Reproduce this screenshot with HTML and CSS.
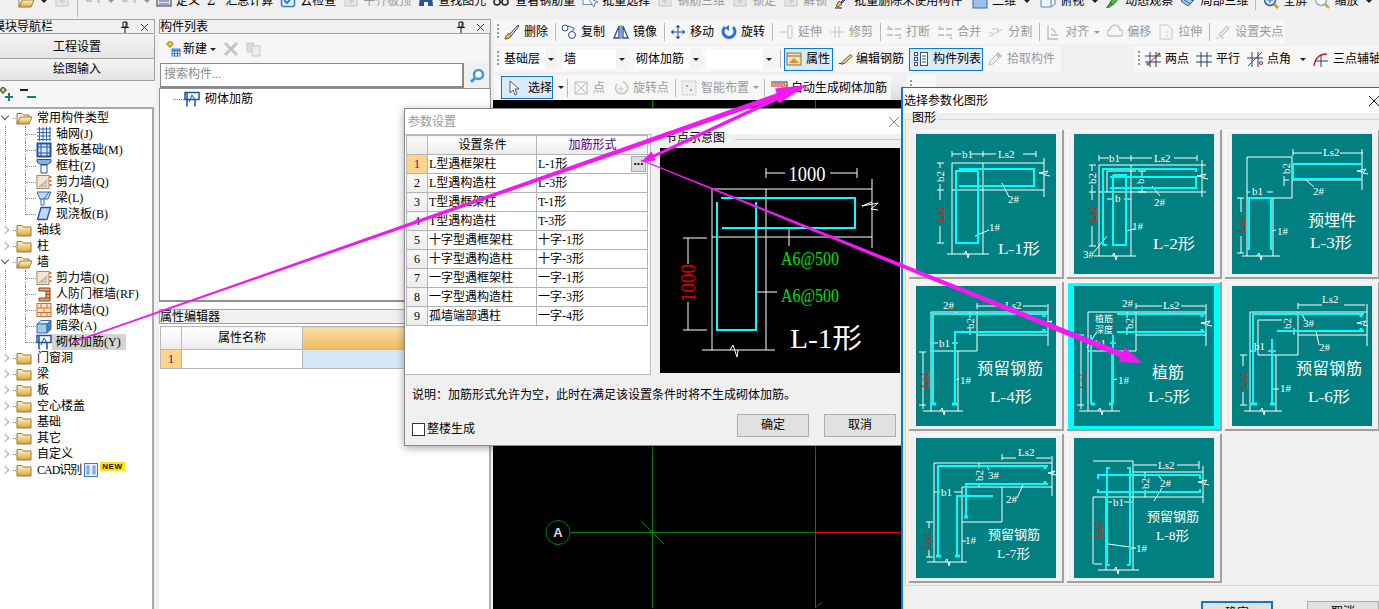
FILE: index.html
```html
<!DOCTYPE html>
<html lang="zh-CN">
<head>
<meta charset="utf-8">
<title>参数设置</title>
<link rel="stylesheet" href="styles.css">
</head>
<body>
<svg class="defs" width="0" height="0" aria-hidden="true">
  <defs>
    <linearGradient id="fy" x1="0" y1="0" x2="0" y2="1"><stop offset="0" stop-color="#fff6c8"/><stop offset="1" stop-color="#e0a428"/></linearGradient>
    <symbol id="folder" viewBox="0 0 16 16"><path d="M1 3.5h5l1.500 1.500H15v9H1z" fill="url(#fy)" stroke="#8a7a50"/></symbol>
    <symbol id="open" viewBox="0 0 16 16"><path d="M1 3.500h5l1.500 1.500H13v2.500H4.500L1 14z" fill="#fff2c4" stroke="#8a7a50"/><path d="M1 14l3.500-7H16l-3 7z" fill="url(#fy)" stroke="#8a7a50"/></symbol>
    <symbol id="grid" viewBox="0 0 16 16"><path d="M1 3h14M1 6.500h14M1 10h14M1 13.500h14M3.500 1v14M7 1v14M10.500 1v14M14 1v14" stroke="#2f62b8" fill="none"/></symbol>
    <symbol id="raft" viewBox="0 0 16 16"><rect x="1.500" y="1.500" width="13" height="13" fill="#dce8f7" stroke="#1f50a8" stroke-width="2"/><path d="M5 1v14M11 1v14M1 5h14M1 11h14" stroke="#1f50a8"/></symbol>
    <symbol id="col" viewBox="0 0 16 16"><path d="M1 1.500h14v2.500l-3.500 2.500H4.500L1 4z" fill="#7fb2e6" stroke="#1f50a8"/><path d="M5 7h6v8H5z" fill="#fff" stroke="#1f50a8"/></symbol>
    <symbol id="shear" viewBox="0 0 16 16"><rect x="1" y="1.500" width="12" height="13" fill="#f3e3d2" stroke="#a88860"/><path d="M3 13l8-7M5 13l6-5M8 13l3-2" stroke="#999"/><path d="M14.500 2v2M14.500 6v2M14.500 10v2" stroke="#e07018" stroke-width="2"/></symbol>
    <symbol id="beam" viewBox="0 0 16 16"><path d="M1 2h14l-3 7H4z" fill="#bcdcf6" stroke="#2a6cc0"/><path d="M5 9v6h3V9M8 9l5-7" stroke="#2a6cc0" fill="none"/></symbol>
    <symbol id="slab" viewBox="0 0 16 16"><path d="M5 1.500h9.500L11 13.500H1.500z" fill="#bcdcf6" stroke="#1f50a8" stroke-width="1.300"/></symbol>
    <symbol id="frame" viewBox="0 0 16 16"><path d="M3 2h11v13H3v-3h7V5H3z" fill="#e8a878" stroke="#8a4018"/><path d="M10 5h4M10 8.500h4M10 12h4" stroke="#8a4018"/></symbol>
    <symbol id="brick" viewBox="0 0 16 16"><rect x="1" y="1.500" width="14" height="13" fill="#fce4cc" stroke="#d07030"/><path d="M1 6h14M1 10.500h14M5 1.500V6M11 1.500V6M8 6v4.500M5 10.500v4M11 10.500v4" stroke="#d07030"/></symbol>
    <symbol id="dark" viewBox="0 0 16 16"><path d="M1 6l4-3.500h10L11 6z" fill="#dcecfa" stroke="#3a6ea8"/><path d="M1 6h10v9H1z" fill="#a8c8e8" stroke="#3a6ea8"/><path d="M11 6l4-3.500v9L11 15z" fill="#4a80b8" stroke="#3a6ea8"/></symbol>
    <symbol id="rebar" viewBox="0 0 16 16"><path d="M1 1.500h14v7H1zM3 1.500v14M11 8.500v7" fill="none" stroke="#1f50a8" stroke-width="1.500"/><path d="M5 11l3-7 3 5" fill="none" stroke="#1f50a8"/></symbol>
    <symbol id="add" viewBox="0 0 16 16"><path d="M4 0h2v2h2v2H6v2H4V4H2V2h2z" fill="#f6d94a" stroke="#a08820"/><rect x="7" y="8" width="8" height="7" fill="#fff" stroke="#3a78c8"/><path d="M7 9.500h8" stroke="#3a78c8" stroke-width="2"/><path d="M9.500 10v5M12.500 10v5M7 12.500h8" stroke="#3a78c8"/></symbol>
    <symbol id="del" viewBox="0 0 16 16"><path d="M2 2l12 12M14 2L2 14" stroke="#c4c4c4" stroke-width="3"/></symbol>
    <symbol id="copyg" viewBox="0 0 16 16"><path d="M1 2h7v9H1z" fill="#ddd" stroke="#c8c8c8"/><path d="M6 5h8v10H6z" fill="#eee" stroke="#c8c8c8"/></symbol>
    <symbol id="lens" viewBox="0 0 16 16"><circle cx="9.500" cy="6.500" r="4.500" fill="#fff" stroke="#3a9ae8" stroke-width="2.500"/><path d="M6 10l-4 4" stroke="#3a9ae8" stroke-width="3"/></symbol>
    <symbol id="doc" viewBox="0 0 16 16"><rect x="1" y="2" width="14" height="11" fill="#dfe8f2" stroke="#334"/><path d="M3 5h10M3 8h10M3 11h10" stroke="#557"/></symbol>
    <symbol id="check" viewBox="0 0 16 16"><rect x="1.500" y="1.500" width="13" height="12" rx="2" fill="#eaf4fd" stroke="#2a80c8" stroke-width="1.500"/><path d="M4 7l3 3 5-6" stroke="#2a80c8" stroke-width="2" fill="none"/></symbol>
    <symbol id="gray" viewBox="0 0 16 16"><rect x="2" y="3" width="12" height="10" fill="#e6e6e6" stroke="#c4c4c4"/><path d="M5 8h6M8 5v6" stroke="#c4c4c4"/></symbol>
    <symbol id="undo" viewBox="0 0 16 16"><path d="M3 6c4-4 10-3 11 4" fill="none" stroke="#c4c4c4" stroke-width="2.500"/><path d="M1 2v7h7z" fill="#c4c4c4"/></symbol>
    <symbol id="binoc" viewBox="0 0 16 16"><path d="M2 3h4v10H1zM10 3h4l1 10h-5zM6 6h4v3H6z" fill="#35508a"/></symbol>
    <symbol id="glasses" viewBox="0 0 16 16"><circle cx="4" cy="9" r="3" fill="none" stroke="#222" stroke-width="1.500"/><circle cx="12" cy="9" r="3" fill="none" stroke="#222" stroke-width="1.500"/><path d="M7 9h2" stroke="#222"/></symbol>
    <symbol id="pick" viewBox="0 0 16 16"><rect x="1" y="1.500" width="10" height="10" fill="#fff" stroke="#6888b8"/><path d="M6 5l6 9 1-4 3-1z" fill="#fff" stroke="#6888b8"/></symbol>
    <symbol id="brush" viewBox="0 0 16 16"><path d="M2 13l3-5 3 3-4 3z" fill="#e8c070" stroke="#705020"/><path d="M7 9l7-7 1 1-7 7z" fill="#6080c8" stroke="#304078"/><path d="M1 15h7" stroke="#222"/></symbol>
    <symbol id="plane" viewBox="0 0 16 16"><rect x="1" y="1" width="14" height="14" fill="#9ec0ee" stroke="#3a68b0"/></symbol>
    <symbol id="box3" viewBox="0 0 16 16"><path d="M1 5l4-3h10v9l-4 3H1z" fill="#eef5fc" stroke="#5a88b8"/><path d="M1 5h10v9M11 5l4-3" fill="none" stroke="#5a88b8"/></symbol>
    <symbol id="orbit" viewBox="0 0 16 16"><path d="M1 15l4-6 3 3-4 3z" fill="#2a9a38"/><path d="M5 9l8-7 2 2-7 8z" fill="#58b848" stroke="#207028"/></symbol>
    <symbol id="local3" viewBox="0 0 16 16"><path d="M1 8l7-6 7 4-7 7z" fill="#a8cce8" stroke="#2a5c90"/><path d="M4 7l7 4M7 4.500l6 3.500" stroke="#2a5c90"/></symbol>
    <symbol id="zoomin" viewBox="0 0 16 16"><circle cx="7" cy="7" r="5.500" fill="#dbeafa" stroke="#345c90" stroke-width="1.500"/><path d="M4 7h6M7 4v6" stroke="#345c90"/><path d="M11 11l4 4" stroke="#c89838" stroke-width="2.500"/></symbol>
    <symbol id="zoomx" viewBox="0 0 16 16"><circle cx="7" cy="7" r="5.500" fill="#fff" stroke="#8ab0d0" stroke-width="1.500"/><path d="M11 11l4 4" stroke="#d8a838" stroke-width="2.500"/></symbol>
    <symbol id="erase" viewBox="0 0 16 16"><path d="M1 15c1-4 3-6 5-5l1 2c-1 2-3 3-6 3z" fill="#e8b048" stroke="#685020"/><path d="M6 10l8-9 1 1-8 10" fill="#fff" stroke="#203878"/></symbol>
    <symbol id="copyc" viewBox="0 0 16 16"><circle cx="4" cy="4" r="3" fill="none" stroke="#345078"/><circle cx="11" cy="11" r="3.500" fill="none" stroke="#345078"/><path d="M7 2l6 2-2 4" fill="none" stroke="#2a70c8"/></symbol>
    <symbol id="mirror" viewBox="0 0 16 16"><path d="M1 14L6 2v12zM15 14L10 2v12z" fill="none" stroke="#28509a" stroke-width="1.300"/><path d="M8 1v14" stroke="#28509a"/></symbol>
    <symbol id="move" viewBox="0 0 16 16"><path d="M8 1v14M1 8h14" stroke="#28509a"/><path d="M8 1l2.500 2.500h-5zM8 15l2.500-2.500h-5zM1 8l2.500-2.500v5zM15 8l-2.500-2.500v5z" fill="#28509a"/></symbol>
    <symbol id="rotate" viewBox="0 0 16 16"><path d="M4 3a6 6 0 1 0 8 0" fill="none" stroke="#2a70d0" stroke-width="3"/><path d="M8 1v6L4 4z" fill="#2a70d0"/></symbol>
    <symbol id="gline" viewBox="0 0 16 16"><path d="M1 8h8M10 2h4v12h-4z" fill="none" stroke="#c4c4c4"/></symbol>
    <symbol id="gcross" viewBox="0 0 16 16"><path d="M1 8h14M6 2v12M10 2v12" fill="none" stroke="#c4c4c4"/></symbol>
    <symbol id="gbreak" viewBox="0 0 16 16"><path d="M1 5h6M1 11h6M9 5h6M9 11h6M2 2l2 2M13 13l2 2" fill="none" stroke="#bbb" stroke-width="1.300"/></symbol>
    <symbol id="gcut" viewBox="0 0 16 16"><path d="M1 13l13-8M4 5h6v4M1 9h4" fill="none" stroke="#c4c4c4"/></symbol>
    <symbol id="galign" viewBox="0 0 16 16"><path d="M3 1v14h10M6 4l5 5M6 11h7" fill="none" stroke="#bbb" stroke-width="1.300"/></symbol>
    <symbol id="gcloud" viewBox="0 0 16 16"><path d="M3 12a3 3 0 0 1 0-6 5 5 0 0 1 10 0 3 3 0 0 1 0 6z" fill="none" stroke="#c4c4c4" stroke-width="1.500"/></symbol>
    <symbol id="gpage" viewBox="0 0 16 16"><path d="M2 1h8l4 4v10H2z" fill="none" stroke="#c4c4c4"/><path d="M9 7v2M9 11v2" stroke="#c4c4c4"/></symbol>
    <symbol id="gpen" viewBox="0 0 16 16"><path d="M1 14h3M6 14h3M4 11l8-9 2 2-8 9z" fill="none" stroke="#c4c4c4" stroke-width="1.200"/></symbol>
    <symbol id="prop" viewBox="0 0 16 16"><rect x="1" y="2" width="14" height="12" fill="#f4e0b0" stroke="#8a7040"/><path d="M1 5h14" stroke="#8a7040"/><path d="M3 12l5-5 5 5z" fill="#d09838"/></symbol>
    <symbol id="pen2" viewBox="0 0 18 16"><path d="M1 13h7" stroke="#222"/><path d="M5 11l9-8 2 2-9 8-3 1z" fill="#e8d090" stroke="#605030"/></symbol>
    <symbol id="list" viewBox="0 0 16 16"><rect x="1.500" y="1.500" width="3" height="3" fill="#fff" stroke="#345078"/><rect x="1.500" y="6.500" width="3" height="3" fill="#fff" stroke="#345078"/><rect x="1.500" y="11.500" width="3" height="3" fill="#fff" stroke="#345078"/><rect x="7.500" y="1.500" width="7" height="13" fill="#fff" stroke="#345078"/><path d="M9 5h4M9 8h4M9 11h4" stroke="#345078"/></symbol>
    <symbol id="dropper" viewBox="0 0 16 16"><path d="M2 14l1-4 6-6 3 3-6 6z" fill="#eee" stroke="#bbb"/><path d="M10 2l4 4" stroke="#bbb" stroke-width="3"/></symbol>
    <symbol id="twop" viewBox="0 0 16 16"><path d="M5 1v15M11 1v15M0 5h16M0 11h16" stroke="#28406a"/><path d="M2 14L15 2" stroke="#d01818"/><circle cx="3" cy="13" r="1.500" fill="#50801a"/><circle cx="14" cy="3" r="1.500" fill="#50801a"/></symbol>
    <symbol id="para" viewBox="0 0 16 16"><path d="M5 1v15M11 1v15M0 5h16M0 11h16" stroke="#28406a"/></symbol>
    <symbol id="ang" viewBox="0 0 16 16"><path d="M5 1v15M11 1v15M0 7h16" stroke="#28406a"/><path d="M1 15L15 1" stroke="#d01818"/><circle cx="14" cy="12" r="1.500" fill="none" stroke="#d01818"/></symbol>
    <symbol id="arc" viewBox="0 0 16 16"><path d="M1 15C2 7 7 3 14 3" fill="none" stroke="#d01818" stroke-width="1.300"/><path d="M8 4v12M2 10h13" stroke="#28406a"/></symbol>
    <symbol id="cursor" viewBox="0 0 16 16"><path d="M5 1v12l3-3 2 5 2-1-2-5h4z" fill="#fff" stroke="#556"/></symbol>
    <symbol id="gbox" viewBox="0 0 16 16"><rect x="2" y="2" width="12" height="12" fill="none" stroke="#bbb"/><path d="M2 2l12 12M14 2L2 14" stroke="#bbb"/></symbol>
    <symbol id="grot" viewBox="0 0 16 16"><path d="M4 4a6 6 0 1 0 6-2" fill="none" stroke="#c4c4c4" stroke-width="1.500"/><path d="M8 6v6M5 9h6" stroke="#c4c4c4"/></symbol>
    <symbol id="gdots" viewBox="0 0 16 16"><rect x="1" y="1" width="14" height="14" fill="#eee" stroke="#c4c4c4" stroke-dasharray="2 1"/><path d="M5 5h2v2H5zM9 9h2v2H9z" fill="#aaa"/></symbol>
    <symbol id="auto" viewBox="0 0 18 16"><path d="M1 2h16v13" fill="none" stroke="#333"/><path d="M1 4h14v11" fill="none" stroke="#e01818"/><path d="M1 6h12v9" fill="none" stroke="#e01818"/></symbol>
    <symbol id="blue" viewBox="0 0 14 14"><rect x=".5" y=".5" width="13" height="13" fill="#e8f2fc" stroke="#3a78c8"/><path d="M3 3h2v8H3zM9 3h2v8H9z" fill="#bcd8f4" stroke="#3a78c8" stroke-width=".8"/></symbol>
    <symbol id="pinic" viewBox="0 0 10 12"><path d="M3 1h4v5H3z" fill="#fff" stroke="#111"/><path d="M1 6.500h8M5 7v5" stroke="#111"/><path d="M6 1v5" stroke="#111"/></symbol>
    <symbol id="xxic" viewBox="0 0 9 9"><path d="M1 1l7 7M8 1L1 8" stroke="#333"/></symbol>
    <symbol id="expall" viewBox="0 0 14 14"><path d="M2 0h2v2h2v2H4v2H2V4H0V2h2z" fill="#e6d86a" stroke="#222" stroke-width=".8"/><path d="M9 6v8M5 10h8" stroke="#1e7a7a" stroke-width="2"/></symbol>
    <symbol id="colall" viewBox="0 0 16 14"><path d="M0 3h8" stroke="#222" stroke-width="2"/><path d="M7 10h9" stroke="#1e7a7a" stroke-width="2"/></symbol>
  </defs>
</svg>

<div class="app">
  <div class="topbar">
    <div class="toprow">
      <svg class="ic"><use href="#open"/></svg><i class="dd"></i>
      <svg class="ic off"><use href="#gray"/></svg>
      <i class="sep tall"></i>
      <svg class="ic off"><use href="#undo"/></svg><i class="dd off"></i>
      <svg class="ic off"><use href="#undo"/></svg><i class="dd off"></i>
      <span class="tb m1"><svg class="ic"><use href="#doc"/></svg>定义</span>
      <span class="tb sum"><b class="sigma">Σ</b>汇总计算</span>
      <span class="tb"><svg class="ic"><use href="#check"/></svg>云检查</span>
      <span class="tb off"><svg class="ic"><use href="#gray"/></svg>平齐板顶</span>
      <span class="tb"><svg class="ic"><use href="#binoc"/></svg>查找图元</span>
      <span class="tb tight"><svg class="ic"><use href="#glasses"/></svg>查看钢筋量</span>
      <span class="tb"><svg class="ic"><use href="#pick"/></svg>批量选择</span>
      <span class="tb off"><svg class="ic"><use href="#gray"/></svg>钢筋三维</span>
      <span class="tb off"><svg class="ic"><use href="#gray"/></svg>锁定</span>
      <span class="tb off"><svg class="ic"><use href="#gray"/></svg>解锁</span>
      <span class="tb"><svg class="ic"><use href="#brush"/></svg>批量删除未使用构件</span>
      <span class="tb sp"><svg class="ic"><use href="#plane"/></svg>二维<i class="dd"></i></span>
      <span class="tb sp"><svg class="ic"><use href="#box3"/></svg>俯视<i class="dd"></i></span>
      <span class="tb"><svg class="ic"><use href="#orbit"/></svg>动态观察</span>
      <span class="tb"><svg class="ic"><use href="#local3"/></svg>局部三维</span>
      <i class="sep"></i>
      <span class="tb"><svg class="ic"><use href="#zoomin"/></svg>全屏</span>
      <span class="tb"><svg class="ic"><use href="#zoomx"/></svg>缩放<i class="dd"></i></span>
    </div>
  </div>

  <div class="main">
    <aside class="left">
      <div class="dock-head"><span class="dock-cut">模块导航栏</span><span class="dock-tools"><svg class="pinic"><use href="#pinic"/></svg><svg class="xxic"><use href="#xxic"/></svg></span></div>
      <div class="nav-btn first">工程设置</div>
      <div class="nav-btn">绘图输入</div>
      <div class="tree-tools"><svg class="tt"><use href="#expall"/></svg><svg class="tt2"><use href="#colall"/></svg></div>
      <div class="tree">
        <div class="node-row"><span class="exp down"></span><span class="hconn"></span><svg class="ic"><use href="#open"/></svg><span class="lb">常用构件类型</span></div>
        <div class="kid"><span class="conn"></span><svg class="ic"><use href="#grid"/></svg><span class="lb">轴网(J)</span></div>
        <div class="kid"><span class="conn"></span><svg class="ic"><use href="#raft"/></svg><span class="lb">筏板基础(M)</span></div>
        <div class="kid"><span class="conn"></span><svg class="ic"><use href="#col"/></svg><span class="lb">框柱(Z)</span></div>
        <div class="kid"><span class="conn"></span><svg class="ic"><use href="#shear"/></svg><span class="lb">剪力墙(Q)</span></div>
        <div class="kid"><span class="conn"></span><svg class="ic"><use href="#beam"/></svg><span class="lb">梁(L)</span></div>
        <div class="kid end"><span class="conn"></span><svg class="ic"><use href="#slab"/></svg><span class="lb">现浇板(B)</span></div>
        <div class="node-row"><span class="exp"></span><span class="hconn"></span><svg class="ic"><use href="#folder"/></svg><span class="lb">轴线</span></div>
        <div class="node-row"><span class="exp"></span><span class="hconn"></span><svg class="ic"><use href="#folder"/></svg><span class="lb">柱</span></div>
        <div class="node-row"><span class="exp down"></span><span class="hconn"></span><svg class="ic"><use href="#open"/></svg><span class="lb">墙</span></div>
        <div class="kid"><span class="conn"></span><svg class="ic"><use href="#shear"/></svg><span class="lb">剪力墙(Q)</span></div>
        <div class="kid"><span class="conn"></span><svg class="ic"><use href="#frame"/></svg><span class="lb">人防门框墙(RF)</span></div>
        <div class="kid"><span class="conn"></span><svg class="ic"><use href="#brick"/></svg><span class="lb">砌体墙(Q)</span></div>
        <div class="kid"><span class="conn"></span><svg class="ic"><use href="#dark"/></svg><span class="lb">暗梁(A)</span></div>
        <div class="kid end"><span class="conn"></span><svg class="ic"><use href="#rebar"/></svg><span class="lb sel-row">砌体加筋(Y)</span></div>
        <div class="node-row"><span class="exp"></span><span class="hconn"></span><svg class="ic"><use href="#folder"/></svg><span class="lb">门窗洞</span></div>
        <div class="node-row"><span class="exp"></span><span class="hconn"></span><svg class="ic"><use href="#folder"/></svg><span class="lb">梁</span></div>
        <div class="node-row"><span class="exp"></span><span class="hconn"></span><svg class="ic"><use href="#folder"/></svg><span class="lb">板</span></div>
        <div class="node-row"><span class="exp"></span><span class="hconn"></span><svg class="ic"><use href="#folder"/></svg><span class="lb">空心楼盖</span></div>
        <div class="node-row"><span class="exp"></span><span class="hconn"></span><svg class="ic"><use href="#folder"/></svg><span class="lb">基础</span></div>
        <div class="node-row"><span class="exp"></span><span class="hconn"></span><svg class="ic"><use href="#folder"/></svg><span class="lb">其它</span></div>
        <div class="node-row"><span class="exp"></span><span class="hconn"></span><svg class="ic"><use href="#folder"/></svg><span class="lb">自定义</span></div>
        <div class="node-row"><span class="exp"></span><span class="hconn"></span><svg class="ic"><use href="#folder"/></svg><span class="lb cad-lb">CAD识别</span><svg class="cadic"><use href="#blue"/></svg><span class="newtag">NEW</span></div>
      </div>
    </aside>

    <section class="mid">
      <div class="dock-head"><span>构件列表</span><span class="dock-tools"><svg class="pinic"><use href="#pinic"/></svg><svg class="xxic"><use href="#xxic"/></svg></span></div>
      <div class="mid-tools">
        <svg class="ic"><use href="#add"/></svg><span class="new-lb">新建</span><i class="dd"></i>
        <svg class="ic ml"><use href="#del"/></svg>
        <svg class="ic ml"><use href="#copyg"/></svg>
      </div>
      <div class="search"><span class="search-in">搜索构件...</span><span class="search-btn"><svg class="ic"><use href="#lens"/></svg></span></div>
      <div class="list-box">
        <div class="list-row"><span class="list-conn"></span><svg class="ic"><use href="#rebar"/></svg><span>砌体加筋</span></div>
      </div>
      <div class="dock-head prop-head"><span>属性编辑器</span></div>
      <div class="prop-box">
        <table class="prop">
          <tr><th class="n"></th><th class="pname">属性名称</th><th class="hot">属性值</th></tr>
          <tr><td class="n on">1</td><td></td><td class="val"></td></tr>
        </table>
      </div>
    </section>

    <section class="right">
      <div class="row r1">
        <div class="group g1">
          <i class="grip"></i>
          <span class="tb"><svg class="ic"><use href="#erase"/></svg>删除</span><i class="sep"></i>
          <span class="tb"><svg class="ic"><use href="#copyc"/></svg>复制</span>
          <span class="tb nudge"><svg class="ic"><use href="#mirror"/></svg>镜像</span><i class="sep"></i>
          <span class="tb"><svg class="ic"><use href="#move"/></svg>移动</span>
          <span class="tb"><svg class="ic"><use href="#rotate"/></svg>旋转</span><i class="sep"></i>
          <span class="tb off"><svg class="ic"><use href="#gline"/></svg>延伸</span>
          <span class="tb off"><svg class="ic"><use href="#gcross"/></svg>修剪</span><i class="sep"></i>
          <span class="tb off"><svg class="ic"><use href="#gbreak"/></svg>打断</span>
          <span class="tb off"><svg class="ic"><use href="#gbreak"/></svg>合并</span>
          <span class="tb off"><svg class="ic"><use href="#gcut"/></svg>分割</span><i class="sep"></i>
          <span class="tb off wide"><svg class="ic"><use href="#galign"/></svg>对齐<i class="dd off"></i></span>
          <span class="tb off"><svg class="ic"><use href="#gcloud"/></svg>偏移</span>
          <span class="tb off"><svg class="ic"><use href="#gpage"/></svg>拉伸</span><i class="sep"></i>
          <span class="tb off"><svg class="ic"><use href="#gpen"/></svg>设置夹点</span>
        </div>
      </div>
      <div class="row r2">
        <div class="group g2">
          <i class="grip"></i>
          <span class="combo c55">基础层</span>
          <span class="combo c66">墙</span>
          <span class="combo c68">砌体加筋</span>
          <span class="combo c69"></span>
          <i class="sep"></i>
          <span class="tb act a49"><svg class="ic"><use href="#prop"/></svg>属性</span>
          <span class="tb pen"><svg class="ic"><use href="#pen2"/></svg>编辑钢筋</span>
          <span class="tb act a74"><svg class="ic"><use href="#list"/></svg>构件列表</span>
          <span class="tb off"><svg class="ic"><use href="#dropper"/></svg>拾取构件</span>
        </div>
        <div class="group g2b">
          <i class="grip"></i>
          <span class="tb"><svg class="ic"><use href="#twop"/></svg>两点</span>
          <span class="tb"><svg class="ic"><use href="#para"/></svg>平行</span>
          <span class="tb ptang"><svg class="ic"><use href="#ang"/></svg>点角<i class="dd"></i></span>
          <span class="tb"><svg class="ic"><use href="#arc"/></svg>三点辅轴</span>
        </div>
      </div>
      <div class="row r3">
        <div class="group g3">
          <span class="tb act a51"><svg class="ic"><use href="#cursor"/></svg>选择</span><i class="dd"></i><i class="sep s1"></i>
          <span class="tb off pt"><svg class="ic"><use href="#gbox"/></svg>点</span>
          <span class="tb off"><svg class="ic"><use href="#grot"/></svg>旋转点</span><i class="sep s2"></i>
          <span class="tb off"><svg class="ic"><use href="#gdots"/></svg>智能布置<i class="dd off"></i></span><i class="sep"></i>
          <span class="tb auto"><svg class="ic wide-ic"><use href="#auto"/></svg>自动生成砌体加筋</span>
        </div>
        <div class="group g3b"><i class="grip"></i></div>
      </div>
      <div class="canvas">
        <svg class="cad" viewBox="493 101 886 508">
          <path class="gl" d="M652.500 101V609M570 533.500H815.500M815.500 533.500V609M641 522l23 23M815 609l7-6"/>
          <path class="rl" d="M815.500 101V533.500H1379"/>
          <circle class="gl" cx="558" cy="533.500" r="12"/>
          <text class="axis" x="558" y="538">A</text>
        </svg>
      </div>
    </section>
  </div>

  <section class="dlg params">
    <header class="dlg-title grey"><span>参数设置</span><svg class="close" viewBox="0 0 10 10"><path d="M0 0l10 10M10 0L0 10"/></svg></header>
    <div class="dlg-main">
      <div class="grid-box">
        <table class="grid">
          <tr><th class="n"></th><th class="c1">设置条件</th><th class="hot">加筋形式</th></tr>
          <tr><td class="n on">1</td><td>L型遇框架柱</td><td class="pick-cell">L-1形<span class="more">...</span></td></tr>
          <tr><td class="n">2</td><td>L型遇构造柱</td><td>L-3形</td></tr>
          <tr><td class="n">3</td><td>T型遇框架柱</td><td>T-1形</td></tr>
          <tr><td class="n">4</td><td>T型遇构造柱</td><td>T-3形</td></tr>
          <tr><td class="n">5</td><td>十字型遇框架柱</td><td>十字-1形</td></tr>
          <tr><td class="n">6</td><td>十字型遇构造柱</td><td>十字-3形</td></tr>
          <tr><td class="n">7</td><td>一字型遇框架柱</td><td>一字-1形</td></tr>
          <tr><td class="n">8</td><td>一字型遇构造柱</td><td>一字-3形</td></tr>
          <tr><td class="n">9</td><td>孤墙端部遇柱</td><td>一字-4形</td></tr>
        </table>
      </div>
      <div class="node-group">
        <span class="legend">节点示意图</span>
        <svg class="node-pic" viewBox="0 0 240 225">
          <path class="w" d="M52 41H212M52 89H212M52 41V202M106 41V202M42 202H115M212 31V100M129 80V98M97 144H117"/>
          <path class="w" d="M70 202l3-5 4 12 1-7M212 54l-10 4 16-3-7 6 7 1"/>
          <path class="w" d="M106 20V30M197 20V30M106 25H125M170 25H197M23 90H47M23 182H47M28 90V116M28 154V182"/>
          <path class="c" d="M61 50H195V80H62M57 54V182H96V54"/>
          <text class="pt22" x="147" y="33" textLength="37" lengthAdjust="spacingAndGlyphs">1000</text>
          <text class="pt22 red" transform="rotate(-90 28 135)" x="28" y="142" textLength="38" lengthAdjust="spacingAndGlyphs">1000</text>
          <text class="pt20 green" x="121" y="117" textLength="58" lengthAdjust="spacingAndGlyphs">A6@500</text>
          <text class="pt20 green" x="121" y="154" textLength="58" lengthAdjust="spacingAndGlyphs">A6@500</text>
          <text class="pt26" x="130" y="200" textLength="72" lengthAdjust="spacingAndGlyphs">L-1形</text>
        </svg>
      </div>
    </div>
    <p class="note">说明：加筋形式允许为空，此时在满足该设置条件时将不生成砌体加筋。</p>
    <div class="dlg-foot">
      <label class="chk"><span class="box"></span>整楼生成</label>
      <span class="btn">确定</span>
      <span class="btn">取消</span>
    </div>
  </section>

  <section class="dlg shapes">
    <header class="dlg-title"><span>选择参数化图形</span><svg class="close dark" viewBox="0 0 10 10"><path d="M0 0l10 10M10 0L0 10"/></svg></header>
    <div class="shape-group">
      <span class="legend">图形</span>
      <div class="tiles">
        <div class="tile">
          <svg class="pic" viewBox="0 0 140 140">
            <path class="w" d="M36 29H128M36 56H128M36 29V120M67 29V120M31 120H73M128 24V63M48 120l2-3 2 7 1-4M128 40l-5-1 9-2-3 4 5 1"/>
            <path class="w" d="M36 17V23M36 20H45M55 20H80M107 20H120M67 17V23M120 17V23M21 29H28M24 29V34M24 50V66M24 92V109M21 56H28M21 109H28M86 49l7 14M59 102l14-6"/>
            <path class="c" d="M43 52H118V35H43M62 37V109H40V37H62"/>
            <text class="t" x="46" y="24">b1</text><text class="t" x="82" y="24">Ls2</text>
            <text class="t" transform="rotate(-90 24 42)" x="18" y="46">b2</text>
            <text class="t red" transform="rotate(-90 24 79)" x="15" y="83">Ls1</text>
            <text class="t" x="92" y="69">2#</text><text class="t" x="73" y="97">1#</text><text class="m" x="82" y="120" textLength="42" lengthAdjust="spacingAndGlyphs">L-1形</text>
          </svg>
        </div>
        <div class="tile">
          <svg class="pic" viewBox="0 0 140 140">
            <path class="w" d="M25 31H132M25 58H132M25 31V122M57 31V122M33 37H62M33 37V58M20 122H62M128 26V63M38 122l2-3 2 7 1-4M128 43l-5-1 9-2-3 4 5 1"/>
            <path class="w" d="M25 21V27M25 24H35M45 24H78M100 24H123M57 21V27M123 21V27M15 31H22M18 31V37M18 51V66M18 92V112M15 58H22M15 112H22M33 65H40M50 65H57M64 37H72M64 58H72M68 37V42M68 52V58M78 52l8 10M52 97l8-2M33 102L20 118"/>
            <path class="c" d="M122 38V35H29V111H33M36 43H122V54H36M39 41V111H52V41H39"/>
            <text class="t" x="35" y="28">b1</text><text class="t" x="80" y="28">Ls2</text><text class="t" x="41" y="68">b</text>
            <text class="t" transform="rotate(-90 18 44)" x="12" y="48">b2</text>
            <text class="t" transform="rotate(-90 66 47)" x="63" y="51">b</text>
            <text class="t red" transform="rotate(-90 18 79)" x="9" y="83">Ls1</text>
            <text class="t" x="80" y="72">2#</text><text class="t" x="58" y="96">1#</text><text class="t" x="9" y="124">3#</text><text class="m" x="79" y="115" textLength="42" lengthAdjust="spacingAndGlyphs">L-2形</text>
          </svg>
        </div>
        <div class="tile">
          <svg class="pic" viewBox="0 0 140 140">
            <path class="w" d="M15 23H60V64H15M15 23V122M41 64V122M10 122H48M60 46H130M130 15V56M61 15V22M25 122l2-3 2 7 1-4M130 38l-5-1 9-2-3 4 5 1"/>
            <path class="w" d="M61 19H90M108 19H131M15 58H18M35 58H41M5 64H12M5 119H12M9 64V78M9 102V119M52 42V52M52 46H57M74 46l8 7M39 97l5-1"/>
            <path class="c" d="M130 30H61V45H130M17 116V64H39V116"/>
            <text class="t" x="91" y="22">Ls2</text><text class="t" x="20" y="61">b1</text><text class="t" x="81" y="61">2#</text><text class="t" x="45" y="101">1#</text>
            <text class="t" transform="rotate(-90 54 34)" x="48" y="38">b2</text>
            <text class="t red" transform="rotate(-90 9 90)" x="0" y="94">Ls1</text>
            <text class="l" x="76" y="92">预埋件</text><text class="m" x="78" y="114" textLength="42" lengthAdjust="spacingAndGlyphs">L-3形</text>
          </svg>
        </div>
        <div class="tile">
          <svg class="pic" viewBox="0 0 140 140">
            <path class="w" d="M15 26H132M61 49H132M15 26V125M61 26V65H15M42 65V125M7 125H47M132 18V60M24 125l2-3 2 7 1-4M132 38l-5-1 9-2-3 4 5 1"/>
            <path class="w" d="M61 17V23M61 20H88M107 20H131M40 26l2 3M54 26V32M54 42V49M7 66V123M3 66H10M3 119H10M15 57H22M36 57H42M38 94l5-1"/>
            <path class="c" d="M17 118V28H131M39 118V46H131"/>
            <path class="c4" d="M14 118h6M36 118h6M128 28v3M128 46v-3"/>
            <text class="t" x="27" y="23">2#</text><text class="t" x="89" y="23">Ls2</text><text class="t" x="23" y="61">b1</text><text class="t" x="44" y="98">1#</text>
            <text class="t" transform="rotate(-90 54 37)" x="48" y="41">b2</text>
            <text class="t red" transform="rotate(-90 8 93)" x="-1" y="97">Ls1</text>
            <text class="l" x="61" y="88" textLength="66">预留钢筋</text><text class="m" x="74" y="116" textLength="42" lengthAdjust="spacingAndGlyphs">L-4形</text>
          </svg>
        </div>
        <div class="tile sel">
          <svg class="pic" viewBox="0 0 140 140">
            <path class="w" d="M14 26H132M62 49H132M14 26V125M62 26V65H14M38 65V125M5 125H46M132 18V60M24 125l2-3 2 7 1-4M132 38l-5-1 9-2-3 4 5 1"/>
            <path class="w" d="M62 17V23M62 20H88M107 20H131M53 26V32M53 42V49M7 49V123M3 49H10M3 119H10M14 57H20M36 57H42M38 94l5-1M22 47l-9 15"/>
            <path class="c" d="M17 118V49M39 118V49M43 28H131M43 46H131"/>
            <path class="c4" d="M17 118h4M39 118h-4M128 28v3M128 46v-3"/>
            <text class="t" x="48" y="21">2#</text><text class="t" x="89" y="23">Ls2</text><text class="t" x="21" y="61">b1</text><text class="t" x="44" y="98">1#</text>
            <text class="s" x="21" y="36">植筋</text><text class="s" x="21" y="47">深度</text>
            <text class="t" transform="rotate(-90 55 37)" x="49" y="41">b2</text>
            <text class="t red" transform="rotate(-90 8 94)" x="-1" y="98">Ls1</text>
            <text class="l" x="78" y="92">植筋</text><text class="m" x="74" y="116" textLength="42" lengthAdjust="spacingAndGlyphs">L-5形</text>
          </svg>
        </div>
        <div class="tile">
          <svg class="pic" viewBox="0 0 140 140">
            <path class="w" d="M18 26H135M66 49H135M18 26V125M66 26V69H26V34H50M44 69V125M12 125H50M135 18V60M28 125l2-3 2 7 1-4M130 38l-5-1 9-2-3 4 5 1"/>
            <path class="w" d="M66 17V23M66 19H90M112 19H133M62 42V49M8 69H15M8 119H15M11 69V80M11 106V119M70 28l3 6M84 45l3 14M40 103h7M18 65H24M36 65H44"/>
            <path class="c" d="M21 118V28H132M45 45H132M40 53V118"/>
            <path class="c4" d="M19 118h6M38 118h6M129 28v3M129 45v-3"/>
            <text class="t" x="90" y="17">Ls2</text><text class="t" x="71" y="41">3#</text><text class="t" x="87" y="65">2#</text><text class="t" x="22" y="64">b1</text><text class="t" x="48" y="106">1#</text>
            <text class="t" transform="rotate(-90 55 37)" x="49" y="41">b2</text>
            <text class="t red" transform="rotate(-90 11 94)" x="2" y="98">Ls1</text>
            <text class="l" x="64" y="88" textLength="66">预留钢筋</text><text class="m" x="76" y="116" textLength="42" lengthAdjust="spacingAndGlyphs">L-6形</text>
          </svg>
        </div>
        <div class="tile">
          <svg class="pic" viewBox="0 0 140 140">
            <path class="w" d="M18 25H136M46 49H136M18 25V124M46 49V124M86 49V84H46M11 124H51M136 18V58M29 124l2-3 2 7 1-4M136 36l-4-1 7-2-3 3 4 1"/>
            <path class="w" d="M86 16V22M86 20H100M120 20H135M63 25V30M63 45V49M18 54H24M38 54H46M71 28l2 4M107 47l-6 13M10 84H17M10 119H17M13 84V90M13 112V119M46 103h4"/>
            <path class="c" d="M22 118V28H132M41 118V58H77M50 79V46H132"/>
            <path class="c4" d="M20 118h5M39 118h5M48 79h4M129 28v3M129 46v-3"/>
            <text class="t" x="102" y="18">Ls2</text><text class="t" x="72" y="41">3#</text><text class="t" x="25" y="58">b1</text><text class="t" x="90" y="65">2#</text><text class="t" x="49" y="106">1#</text>
            <text class="t" transform="rotate(-90 63 37)" x="57" y="41">b2</text>
            <text class="t red" transform="rotate(-90 11 102)" x="2" y="106">Ls1</text>
            <text class="n1" x="72" y="101">预留钢筋</text><text class="n2" x="81" y="120" textLength="33" lengthAdjust="spacingAndGlyphs">L-7形</text>
          </svg>
        </div>
        <div class="tile">
          <svg class="pic" viewBox="0 0 140 140">
            <path class="w" d="M19 23H59V59H19M59 34H129M59 59H129M32 59V132M59 59V132M24 132H65M129 28V65M40 132l2-3 2 7 1-4M129 45l-5-1 9-2-3 4 5 1"/>
            <path class="w" d="M60 27H83M103 27H125M125 23V31M71 34V40M71 52V59M19 59V126M20 126H28M33 64H38M50 64H58M84 37l4 5M88 50l-8 13M34 106l22 3M56 110h6"/>
            <path class="c" d="M33 127V30h3M56 127V30h-3M33 127h3M56 127h-3M24 41V37H126V41M24 51V54H126V51"/>
            <text class="t" x="84" y="31">Ls2</text><text class="t" x="39" y="68">b1</text><text class="t" x="86" y="49">2#</text><text class="t" x="62" y="114">1#</text>
            <text class="t" transform="rotate(-90 71 45)" x="65" y="49">b2</text>
            <text class="t red" transform="rotate(-90 24 91)" x="15" y="95">Ls1</text>
            <text class="n1" x="73" y="83">预留钢筋</text><text class="n2" x="82" y="102" textLength="33" lengthAdjust="spacingAndGlyphs">L-8形</text>
          </svg>
        </div>
      </div>
    </div>
    <div class="shape-foot"><span class="btn primary">确定</span><span class="btn">取消</span></div>
  </section>

  <svg class="arrows" viewBox="0 0 1379 609">
    <path d="M73.200 342.700L777 98.800 778.800 103.600 808 85 775 88.400 776.700 93.200 72.800 341.300z"/>
    <path d="M800.800 89.800L654.300 157.500 655.800 160.600 641 162 651.600 151.600 653.100 154.700 799.200 86.200z"/>
    <path d="M640.800 160.500L1120.500 357.500 1118.600 362.100 1142 363 1124.600 347.300 1122.700 351.900 641.200 159.500z"/>
  </svg>
</div>
</body>
</html>
```

FILE: styles.css
```css
* { box-sizing: border-box; }
html, body { margin: 0; padding: 0; }
body { overflow: hidden; }
.defs { position: absolute; }
.app {
  position: relative;
  width: 1379px;
  height: 609px;
  overflow: hidden;
  background: #f0f0f0;
  color: #000;
  font: 12px/16px "Liberation Serif", "Noto Sans CJK SC", serif;
}
.ic { width: 16px; height: 16px; flex: none; display: block; }
.off { color: #9a9a9a; }
i { font-style: normal; }
.dd {
  flex: none;
  width: 0;
  height: 0;
  border: 3px solid transparent;
  border-top: 3px solid #222;
  border-bottom: 0;
  display: block;
}
.dd.off { border-top-color: #999; }
.sep { flex: none; width: 1px; height: 18px; background: #b8b8b8; display: block; }
.grip {
  flex: none;
  width: 2px;
  height: 16px;
  display: block;
  background: repeating-linear-gradient(#999 0 2px, transparent 2px 4px);
}
.tb { flex: none; display: flex; align-items: center; gap: 4px; white-space: nowrap; }
.tb .dd { margin-left: 4px; }

/* top toolbar, cropped by the window */
.topbar { height: 17px; overflow: hidden; }
.toprow {
  display: flex;
  align-items: center;
  gap: 7px;
  height: 16px;
  margin-top: -7px;
  padding-left: 18px;
}
.toprow .tall { height: 30px; margin-top: 14px; }
.toprow .m1 { margin-left: -1px; }
.sum { gap: 10px; }
.sigma { font-size: 14px; font-weight: 400; }
.tight { gap: 6px; }
.sp { margin-left: 3px; }

/* docked columns */
.main { display: flex; height: 592px; padding-top: 2px; }
.left { flex: none; width: 155px; display: flex; flex-direction: column; }
.mid { flex: none; width: 332px; margin-left: 4px; display: flex; flex-direction: column; background: #fff; border-right: 2px solid #b0b0b0; }
.right { flex: 1; margin-left: 2px; display: flex; flex-direction: column; min-width: 0; }
.dock-head {
  flex: none;
  height: 15px;
  display: flex;
  align-items: center;
  justify-content: space-between;
  background: #f0f0f0;
  border: 1px solid #a0a0a0;
  border-left: 0;
  overflow: hidden;
  line-height: 13px;
  padding-top: 1px;
}
.dock-cut { margin-left: -7px; white-space: nowrap; }
.dock-tools { display: flex; gap: 10px; align-items: center; padding-right: 5px; }
.pinic { width: 10px; height: 12px; flex: none; }
.xxic { width: 9px; height: 9px; flex: none; }
.nav-btn {
  flex: none;
  height: 22px;
  line-height: 21px;
  text-align: center;
  background: linear-gradient(#f4f4f4, #e4e4e4);
  border: 1px solid #a0a0a0;
  border-left: 0;
  border-top: 0;
  font-size: 12px;
}
.nav-btn.first { height: 24px; margin-top: 1px; padding-top: 2px; }
.tree-tools { flex: none; height: 26px; background: #f6f6f6; display: flex; align-items: center; gap: 6px; }
.tt { width: 14px; height: 14px; flex: none; }
.tt2 { width: 16px; height: 14px; flex: none; }
.tree {
  flex: 1;
  background: #fff;
  border: 2px solid #a8a8a8;
  border-left: 0;
  border-bottom: 0;
  margin-right: 0;
  width: 154px;
  padding-top: 1px;
}
.node-row { display: flex; align-items: center; height: 16px; }
.exp { width: 13px; height: 16px; position: relative; flex: none; }
.exp::after {
  content: "";
  position: absolute;
  left: 2px;
  top: 5px;
  width: 5px;
  height: 5px;
  border-top: 1.5px solid #aaa;
  border-right: 1.500px solid #aaa;
  transform: rotate(45deg);
}
.exp.down::after {
  left: 2px;
  top: 3px;
  border-color: #555;
  transform: rotate(135deg);
}
.hconn { width: 3px; border-top: 1px dotted #888; flex: none; }
.lb { margin-left: 5px; white-space: nowrap; }
.cad-lb { letter-spacing: -1px; }
.kid {
  display: flex;
  align-items: center;
  height: 16px;
  margin-left: 5px;
  border-left: 1px dotted #888;
  padding-left: 19px;
}
.kid .lb { margin-left: 4px; }
.conn { flex: none; width: 11px; height: 16px; border-left: 1px dotted #888; position: relative; }
.conn::after { content: ""; position: absolute; left: 0; right: 0; top: 8px; border-top: 1px dotted #888; }
.kid.end .conn { height: 9px; align-self: flex-start; }
.kid .sel-row { background: #d3d3d3; margin-left: 0; padding-left: 4px; width: 74px; }
.cadic { width: 14px; height: 14px; margin-left: 3px; flex: none; }
.newtag {
  font: 700 8px/9px "Liberation Sans", sans-serif;
  background: #ffe21a;
  color: #111;
  padding: 0 2px;
  margin: -8px 0 0 2px;
  letter-spacing: .5px;
}

/* component list */
.mid .dock-head { margin-right: -2px; border-left: 1px solid #a0a0a0; }
.mid-tools { flex: none; height: 28px; background: #f6f6f6; display: flex; align-items: center; padding-left: 6px; margin-top: 1px; }
.new-lb { margin: 0 2px 0 2px; }
.mid-tools .dd { margin-left: 1px; }
.ml { margin-left: 7px; }
.search { flex: none; height: 25px; display: flex; background: #f0f0f0; }
.search-in { flex: 1; margin-left: 1px; background: #fff; border: 1px solid #8a8a8a; border-width: 1px 2px 2px 1px; color: #8a8a8a; padding-left: 3px; line-height: 21px; font-size: 12px; }
.search-btn { flex: none; width: 25px; display: flex; align-items: center; justify-content: center; }
.list-box { flex: none; height: 214px; border: 1px solid #909090; border-width: 1px 1px 2px 1px; margin-right: -2px; background: #fff; padding-top: 2px; }
.list-row { display: flex; align-items: center; height: 16px; padding-left: 13px; gap: 5px; }
.list-conn { width: 11px; border-top: 1px dotted #888; margin-right: -5px; }
.prop-head { margin-top: 7px; justify-content: flex-start; }
.prop-box { flex: 1; margin-top: 2px; padding-left: 1px; }
table { border-collapse: collapse; table-layout: fixed; }
.prop { width: 400px; }
.prop th, .prop td { border: 1px solid #b8b8b8; padding: 0; text-align: center; font-weight: 400; }
.prop th { height: 23px; background: linear-gradient(#fff, #ececec); }
.prop td { height: 19px; background: #fff; }
.prop .n { width: 21px; }
.prop .pname { width: 121px; }
.prop .val { background: #d6e8f7; }
th.hot, .prop th.hot { background: linear-gradient(#fbe0a8, #f0ba5c); color: #54007a; }
td.on, .prop td.on { background: #ffd48a; color: #54007a; }

/* right column */
.right { background: linear-gradient(#f0f0f0 0, #f0f0f0 64px, #d8d8d8 84px); }
.row { flex: none; display: flex; align-items: stretch; justify-content: space-between; }
.group { display: flex; align-items: center; gap: 7px; background: #f7f7f7; }
.r1 { height: 24px; margin-top: 1px; }
.r2 { height: 26px; margin-top: 2px; }
.r3 { height: 25px; margin-top: 3px; }
.g1 { width: 791px; padding-left: 3px; margin-left: 1px; }
.g1 .grip { margin-right: -2px; }
.g1 .sep { margin-right: -2px; }
.nudge { margin-left: 1px; }
.wide .dd { margin-left: 1px; }
.g2 { width: 567px; padding-left: 3px; gap: 4px; margin-left: 1px; }
.g2 .grip { margin-right: -1px; }
.g2 .sep { margin: 0 -1px 0 1px; }
.g2b { width: 245px; padding-left: 4px; gap: 7px; }
.g2b .grip { margin-right: -2px; }
.ptang .dd { margin-left: 5px; }
.combo {
  flex: none;
  height: 20px;
  line-height: 20px;
  background: #fff;
  padding-left: 2px;
  position: relative;
  white-space: nowrap;
}
.combo::after { content: ""; position: absolute; right: 0; top: 0; bottom: 0; width: 12px; background: #f3f3f3; }
.combo::before {
  content: "";
  position: absolute;
  right: 3px;
  top: 9px;
  z-index: 1;
  border: 3px solid transparent;
  border-top: 3px solid #222;
  border-bottom: 0;
}
.c55 { width: 55px; }
.c66 { width: 66px; margin-left: 1px; }
.c68 { width: 68px; margin-left: 2px; }
.c69 { width: 69px; }
.act { height: 23px; background: #dbeaf8; border: 1px solid #0a78d7; padding-left: 1px; }
.a49 { width: 49px; }
.a74 { width: 74px; padding-left: 3px; }
.pen { margin: 0 1px; gap: 2px; }
.g3 { width: 398px; padding-left: 7px; gap: 5px; margin-left: 1px; }
.g3 .tb .dd { margin-left: 0; }
.a51 { width: 52px; gap: 7px; padding-left: 3px; }
.s1 { margin-left: -2px; }
.s2 { margin-left: 1px; }
.pt { gap: 4px; margin-right: 3px; }
.auto { gap: 3px; }
.wide-ic { width: 18px; }
.g3b { width: 30px; margin: 0 443px 0 15px; padding-left: 4px; }
.canvas { flex: 1; background: #000; min-height: 0; }
.cad { display: block; width: 886px; height: 508px; }
.cad .gl { fill: none; stroke: #008000; }
.cad .rl { fill: none; stroke: #e01010; }
.axis { fill: #ddd; font: 700 13px "Liberation Sans", sans-serif; text-anchor: middle; }

/* dialogs float over the drawing */
.dlg { position: absolute; background: #f0f0f0; display: flex; flex-direction: column; }
.params {
  left: 404px;
  top: 108px;
  width: 500px;
  height: 338px;
  border: 1px solid #8a8a8a;
  box-shadow: 0 2px 8px rgba(0, 0, 0, .35);
}
.dlg-title {
  flex: none;
  height: 25px;
  background: #fff;
  display: flex;
  align-items: center;
  justify-content: space-between;
  padding: 0 2px 0 3px;
  font-size: 12px;
}
.dlg-title.grey { color: #9a9a9a; }
.close { width: 10px; height: 10px; margin-right: 3px; fill: none; stroke: #888; }
.close.dark { stroke: #222; }
.params .close { margin-right: 2px; }
.dlg-main { flex: none; height: 243px; display: flex; padding-left: 0; gap: 9px; }
.grid-box { flex: none; width: 246px; height: 241px; background: #fff; border: 1px solid #bbb; border-left: 0; padding-left: 1px; }
.grid { width: 242px; margin-top: 0; }
.grid th, .grid td { border: 1px solid #b4b4b4; padding: 0 0 0 1px; height: 19px; font-weight: 400; line-height: 16px; white-space: nowrap; }
.grid th { text-align: center; background: linear-gradient(#fff, #ececec); }
.grid .n { width: 21px; text-align: center; background: linear-gradient(#f8f8f8, #ececec); padding: 0; }
.grid td.n.on { background: #ffd48a; }
.grid .c1 { width: 109px; }
.pick-cell { position: relative; }
.more {
  position: absolute;
  right: 1px;
  top: 1px;
  width: 15px;
  height: 16px;
  background: #dcdcdc;
  border: 1px solid #aaa;
  font: 700 12px/8px "Liberation Sans", sans-serif;
  text-align: center;
  letter-spacing: 0;
}
.node-group { flex: 1; position: relative; display: flex; flex-direction: column; }
.legend { white-space: nowrap; line-height: 14px; }
.node-group .legend { margin: -3px 0 3px 5px; }
.node-group::before { content: ""; position: absolute; left: 75px; right: 0; top: 5px; border-top: 1px solid #ccc; }
.node-pic { display: block; width: 240px; height: 225px; margin-top: 0; background: #000; }
.w { fill: none; stroke: #fff; stroke-width: 1; }
.c { fill: none; stroke: #0ff; stroke-width: 2; }
.c4 { fill: none; stroke: #0ff; stroke-width: 3; }
.node-pic text { fill: #fff; font-family: "Liberation Serif", "Noto Sans CJK SC", serif; }
.pt22 { font-size: 21px; text-anchor: middle; }
.pt20 { font-size: 19px; }
.pt26 { font-size: 27px; }
.node-pic .red { fill: #e00000; }
.node-pic .green { fill: #00e000; }
.note { flex: none; margin: 10px 0 0 7px; line-height: 16px; }
.dlg-foot { flex: 1; display: flex; align-items: flex-start; margin-top: 11px; padding-left: 7px; }
.chk { display: flex; align-items: center; gap: 2px; margin: 7px auto 0 0; }
.box { width: 13px; height: 13px; background: #fff; border: 1px solid #333; }
.btn {
  flex: none;
  width: 72px;
  height: 23px;
  line-height: 21px;
  text-align: center;
  background: #e1e1e1;
  border: 1px solid #adadad;
}
.dlg-foot .btn + .btn { margin-left: 15px; }
.dlg-foot .btn:last-child { margin-right: 7px; }
.shapes {
  left: 901px;
  top: 87px;
  width: 478px;
  height: 522px;
  border-left: 2px solid #0a78d7;
  border-top: 1px solid #0a78d7;
  overflow: hidden;
}
.shapes .dlg-title { padding: 0 0 0 1px; }
.shapes .close { margin-right: 0; }
.shape-group {
  flex: none;
  position: relative;
  margin: 6px 0 0 2px;
  height: 467px;
  width: 480px;
  border: 1px solid #d8d8d8;
  padding: 10px 0 0 3px;
}
.shape-group .legend { position: absolute; left: 6px; top: -9px; padding: 0 2px 0 0; background: #f0f0f0; }
.tiles { display: grid; grid-template-columns: repeat(3, 155px); grid-auto-rows: 149px; gap: 3px; }
.tile {
  padding: 4px 8px 0 7px;
  border: 1px solid #a0a0a0;
  border-width: 0 2px 2px 0;
  box-shadow: inset 1px 1px 0 #fff;
  background: #f0f0f0;
}
.tile.sel { background: #0ff; border-color: #a0a0a0; }
.pic { display: block; width: 140px; height: 140px; background: #008080; }
.pic text { fill: #fff; font-family: "Liberation Serif", "Noto Sans CJK SC", serif; }
.pic .t { font-size: 11px; }
.pic .red { fill: #f00; }
.pic .s { font-size: 9px; }
.pic .m { font-size: 15px; }
.pic .l { font-size: 16px; }
.pic .n1 { font-size: 13px; }
.pic .n2 { font-size: 13px; }
.shape-foot { flex: none; display: flex; justify-content: flex-end; gap: 34px; margin-top: 15px; padding-right: 0; }
.shape-foot .btn.primary { border: 2px solid #0a78d7; }

.arrows { position: absolute; left: 0; top: 0; width: 1379px; height: 609px; pointer-events: none; }
.arrows path { fill: #f01af0; }
```
